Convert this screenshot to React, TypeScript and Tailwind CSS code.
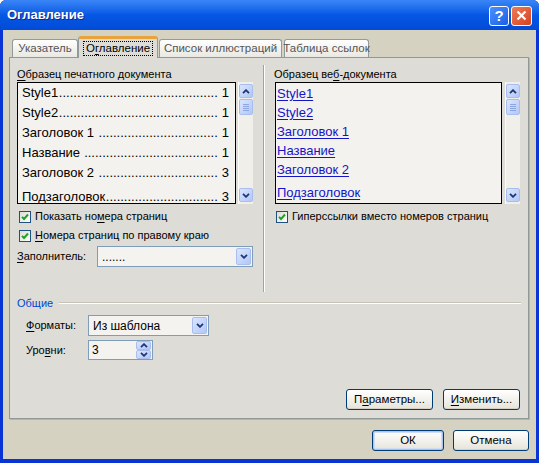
import React, { useLayoutEffect, useRef, useState } from "react";

const FONT = "font-['Liberation_Sans',Arial,sans-serif]";

function Check() {
  return (
    <span className="w-[12px] h-[12px] shrink-0 border border-[#1c5180] bg-linear-to-br from-[#dcdcd5] to-white flex items-center justify-center">
      <svg width="8" height="8" viewBox="0 0 8 8">
        <path d="M1 3.8 L3 6 L7 1.5" stroke="#21a121" strokeWidth="1.9" fill="none" />
      </svg>
    </span>
  );
}

function XpBtn({ dir, w = 15, h = 15 }: { dir: "up" | "down"; w?: number; h?: number }) {
  return (
    <div
      className="rounded-[2px] border border-[#a8bdf0] bg-linear-to-br from-[#dbe6fe] to-[#b2c7f6] flex items-center justify-center shrink-0"
      style={{ width: w, height: h }}
    >
      <svg width="8" height="5" viewBox="0 0 8 5">
        <path
          d={dir === "up" ? "M1 4.2 L4 1.2 L7 4.2" : "M1 0.8 L4 3.8 L7 0.8"}
          stroke="#1d3577"
          strokeWidth="1.8"
          fill="none"
        />
      </svg>
    </div>
  );
}

function Scrollbar() {
  return (
    <div className="w-[15px] h-[122px] bg-[#f0efe9] border-l border-[#fbfbf8] flex flex-col items-center py-[2px]">
      <XpBtn dir="up" w={14} h={14} />
      <div className="w-[14px] h-[16px] mt-px rounded-[2px] border border-[#a8bdf0] bg-linear-to-br from-[#dbe6fe] to-[#b2c7f6] flex flex-col items-center justify-center gap-px">
        <div className="w-[6px] h-px bg-[#8da6e0]" />
        <div className="w-[6px] h-px bg-[#8da6e0]" />
        <div className="w-[6px] h-px bg-[#8da6e0]" />
        <div className="w-[6px] h-px bg-[#8da6e0]" />
      </div>
      <div className="flex-1" />
      <XpBtn dir="down" w={14} h={14} />
    </div>
  );
}

function Btn({ children, w, def }: { children: React.ReactNode; w: number; def?: boolean }) {
  return (
    <div
      className={
        "h-[21px] rounded-[3px] border border-[#003c74] bg-linear-to-b from-white to-[#e6e4da] flex items-center justify-center text-[11.5px] text-black whitespace-nowrap " +
        (def ? "shadow-[inset_0_0_0_1px_#a9c3ee,inset_0_0_0_2px_#cfdcf6]" : "shadow-[inset_0_-1px_0_#d6d0c5]")
      }
      style={{ width: w }}
    >
      {children}
    </div>
  );
}

const U = ({ children }: { children: React.ReactNode }) => (
  <span className="underline underline-offset-[2px] decoration-1">{children}</span>
);

function Leader() {
  const ref = useRef<HTMLSpanElement>(null);
  const probe = useRef<HTMLSpanElement>(null);
  const [n, setN] = useState(0);
  useLayoutEffect(() => {
    if (!ref.current || !probe.current) return;
    const avail = ref.current.getBoundingClientRect().width;
    const dw = probe.current.getBoundingClientRect().width / 10;
    setN(Math.max(0, Math.floor(avail / dw)));
  }, []);
  return (
    <span ref={ref} className="flex-1 min-w-0 relative flex justify-end">
      <span ref={probe} className="absolute invisible">..........</span>
      <span>{".".repeat(n)}</span>
    </span>
  );
}

const leftItems: [string, string, boolean?][] = [
  ["Style1", "1"],
  ["Style2", "1"],
  ["Заголовок 1 ", "1"],
  ["Название ", "1"],
  ["Заголовок 2 ", "3"],
  ["Подзаголовок", "3", true],
];

const rightItems: [string, boolean?][] = [
  ["Style1"],
  ["Style2"],
  ["Заголовок 1"],
  ["Название"],
  ["Заголовок 2"],
  ["Подзаголовок", true],
];

export default function App() {
  return (
    <div className={"w-[539px] h-[463px] flex flex-col bg-[#0a33d6] rounded-t-[6px] overflow-hidden " + FONT}>
      {/* Title bar */}
      <div className="h-[30px] shrink-0 flex items-center pl-[7px] pr-[7px] bg-linear-to-b from-[#3a86f7] via-[#0557e4] to-[#024bd6]">
        <span className="text-white font-bold text-[13px] [text-shadow:1px_1px_0_#0b2a8a]">Оглавление</span>
        <div className="ml-auto flex gap-[2px] mt-[1px]">
          <div className="w-[20px] h-[20px] rounded-[3px] border border-white bg-linear-to-br from-[#4c90fb] to-[#1a5fe6] flex items-center justify-center text-white font-bold text-[15px] leading-none">
            ?
          </div>
          <div className="w-[21px] h-[20px] rounded-[3px] border border-white bg-linear-to-br from-[#ee7a57] to-[#d6411b] flex items-center justify-center">
            <svg width="11" height="11" viewBox="0 0 11 11">
              <path d="M1.5 1.5 L9.5 9.5 M9.5 1.5 L1.5 9.5" stroke="white" strokeWidth="2.2" />
            </svg>
          </div>
        </div>
      </div>

      {/* Client */}
      <div className="flex-1 mx-[3px] mb-[4px] bg-[#d6d2c2] flex flex-col">
        {/* Tabs */}
        <div className="flex items-end pt-[6px] pl-[9px] text-[11.5px] whitespace-nowrap">
          <div className="w-[66px] h-[18px] rounded-t-[3px] border border-b-0 border-[#919b9c] bg-linear-to-b from-white to-[#e9e8e2] flex items-center justify-center text-[#555]">
            Указатель
          </div>
          <div className="relative z-10 w-[80px] h-[22px] -mb-px rounded-t-[3px] border-x border-[#919b9c] border-t-[3px] border-t-[#e8a33c] bg-[#dedcd6] flex items-center justify-center text-black">
            <span className="border border-dotted border-black px-[2px] leading-[13px]">
              О<U>г</U>лавление
            </span>
          </div>
          <div className="ml-px w-[123px] h-[18px] rounded-t-[3px] border border-b-0 border-[#919b9c] bg-linear-to-b from-white to-[#e9e8e2] flex items-center justify-center text-[#555]">
            Список иллюстраций
          </div>
          <div className="ml-[2px] w-[85px] h-[18px] rounded-t-[3px] border border-b-0 border-[#919b9c] bg-linear-to-b from-white to-[#e9e8e2] flex items-center justify-center text-[#555]">
            Таблица ссылок
          </div>
        </div>

        {/* Panel */}
        <div className="ml-[6px] w-[520px] h-[362px] border border-[#8f999a] bg-[#dedcd6] flex flex-col text-[11px] text-black shadow-[1px_1px_0_#b9b5a6]">
          {/* Top section */}
          <div className="flex pt-[9px] pl-[7px]">
            {/* Left column */}
            <div className="w-[236px] flex flex-col">
              <div className="h-[14px] leading-[14px]">
                <U>О</U>бразец печатного документа
              </div>
              <div className="mt-px flex gap-[2px]">
                <div className="w-[220px] h-[122px] border border-black bg-[#f3f2ee] overflow-hidden text-[13px] pl-[4px] pr-[6px]">
                  {leftItems.map(([t, n, last], i) => (
                    <div
                      key={i}
                      className={"flex h-[20px] items-center whitespace-nowrap " + (last ? "mt-[4px]" : "")}
                    >
                      <span className="whitespace-pre shrink-0">{t}</span>
                      <Leader />
                      <span className="whitespace-pre shrink-0 pl-[4px]">{n}</span>
                    </div>
                  ))}
                </div>
                <Scrollbar />
              </div>
              <div className="mt-[6px] h-[13px] flex items-center gap-[4px] pl-[2px]">
                <Check />
                <span>
                  Показать но<U>м</U>ера страниц
                </span>
              </div>
              <div className="mt-[6px] h-[13px] flex items-center gap-[4px] pl-[2px]">
                <Check />
                <span>
                  <U>Н</U>омера страниц по правому краю
                </span>
              </div>
              <div className="mt-[4px] flex items-center">
                <span className="w-[80px]">
                  <U>З</U>аполнитель:
                </span>
                <div className="w-[156px] h-[21px] border border-[#7f9db9] bg-[#f4f3f0] flex items-center pl-[4px] pr-[1px]">
                  <span className="flex-1 text-[12px]">.......</span>
                  <XpBtn dir="down" w={15} h={17} />
                </div>
              </div>
            </div>

            {/* Separator */}
            <div className="ml-[10px] -mt-[2px] w-[2px] h-[227px] border-l border-[#a4a29a] border-r border-r-white" />

            {/* Right column */}
            <div className="ml-[9px] w-[246px] flex flex-col">
              <div className="h-[14px] leading-[14px]">
                Образец ве<U>б</U>-документа
              </div>
              <div className="mt-px flex gap-[3px] pl-px">
                <div className="w-[228px] h-[122px] border border-black bg-[#f3f2ee] overflow-hidden text-[13px] pl-px pt-px">
                  {rightItems.map(([t, last], i) => (
                    <div key={i} className={"h-[19px] flex items-center " + (last ? "mt-[4px]" : "")}>
                      <span className="text-[#1515c8] underline underline-offset-[2px]">{t}</span>
                    </div>
                  ))}
                </div>
                <Scrollbar />
              </div>
              <div className="mt-[6px] h-[13px] flex items-center gap-[4px] pl-[2px]">
                <Check />
                <span>Гиперссылки вместо номеров страниц</span>
              </div>
            </div>
          </div>

          {/* Общие */}
          <div className="mt-[4px] h-[14px] flex items-center pl-[7px] pr-[7px]">
            <span className="text-[#0046d5]">Общие</span>
            <div className="ml-[6px] flex-1 h-[2px] border-t border-[#c6c3b6] border-b border-b-white" />
          </div>
          <div className="mt-[5px] flex items-center pl-[16px]">
            <span className="w-[62px]">
              <U>Ф</U>орматы:
            </span>
            <div className="w-[121px] h-[21px] border border-[#7f9db9] bg-[#f4f3f0] flex items-center pl-[4px] pr-px">
              <span className="flex-1 text-[12px]">Из шаблона</span>
              <XpBtn dir="down" w={15} h={17} />
            </div>
          </div>
          <div className="mt-[4px] flex items-center pl-[16px]">
            <span className="w-[62px]">
              Уро<U>в</U>ни:
            </span>
            <div className="w-[65px] h-[20px] border border-[#7f9db9] bg-[#f4f3f0] flex items-center pl-[3px] pr-px">
              <span className="flex-1 text-[12px]">3</span>
              <div className="flex flex-col gap-0">
                <XpBtn dir="up" w={15} h={9} />
                <XpBtn dir="down" w={15} h={9} />
              </div>
            </div>
          </div>

          {/* Panel buttons */}
          <div className="mt-[29px] flex justify-end gap-[10px] pr-[8px]">
            <Btn w={87}>
              П<U>а</U>раметры...
            </Btn>
            <Btn w={77}>
              <U>И</U>зменить...
            </Btn>
          </div>
        </div>

        {/* Dialog buttons */}
        <div className="mt-[11px] flex justify-end gap-[9px] pr-[7px]">
          <Btn w={72} def>
            ОК
          </Btn>
          <Btn w={76}>Отмена</Btn>
        </div>
      </div>
    </div>
  );
}
